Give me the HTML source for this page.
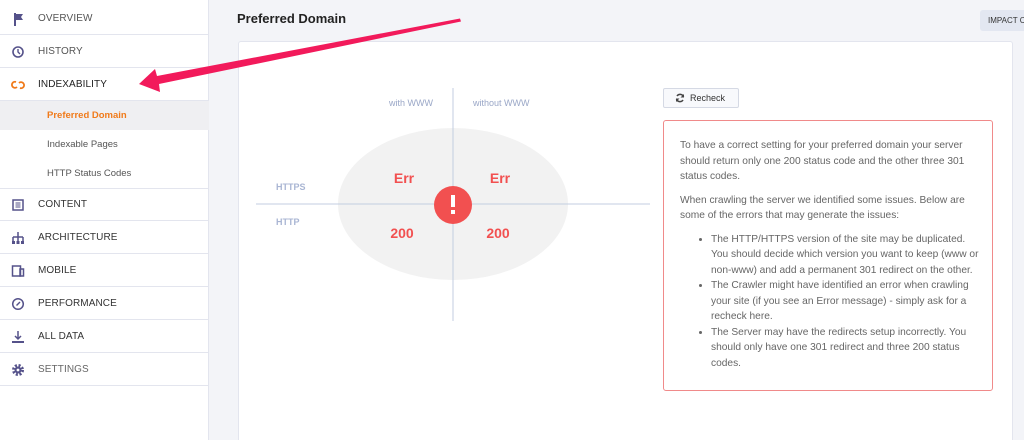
<!DOCTYPE html>
<html><head><meta charset="utf-8"><style>
*{box-sizing:border-box;margin:0;padding:0}
html,body{width:1024px;height:440px;overflow:hidden}
body{background:#f3f4f8;font-family:"Liberation Sans",sans-serif;position:relative}
.sb{position:absolute;left:0;top:0;width:209px;height:440px;background:#fff;border-right:1px solid #e3e5ee}
.it{position:absolute;left:0;width:209px;height:33px;border-bottom:1px solid #e3e5ee;font-size:10px;color:#333;line-height:33px;padding-left:38px;letter-spacing:0.1px}
.it svg{position:absolute;left:11px;top:10px}
.sub{position:absolute;left:0;width:209px;height:29px;line-height:29px;padding-left:47px;font-size:9.5px;color:#555}
.box{position:absolute;left:663px;top:120px;width:330px;height:271px;border:1px solid #f08a8a;border-radius:3px;background:#fff;padding:17px 8px 0 16px;font-size:10.2px;color:#666;line-height:15.5px}
.box ul{padding-left:31px;margin-top:8px}
</style></head><body>
<div class="sb">
 <div class="it" style="top:2px;color:#555"><svg width="14" height="14" viewBox="0 0 14 14"><rect x="3" y="1" width="2" height="13" fill="#55528a"/><path d="M5 2h7l-2 3 2 3H5z" fill="#55528a"/></svg>OVERVIEW</div>
 <div class="it" style="top:35px;color:#555"><svg width="14" height="14" viewBox="0 0 14 14"><circle cx="7" cy="7" r="5" fill="none" stroke="#55528a" stroke-width="1.6"/><path d="M7 4v3l2 2" stroke="#55528a" stroke-width="1.4" fill="none"/></svg>HISTORY</div>
 <div class="it" style="top:68px;color:#222"><svg width="14" height="14" viewBox="0 0 14 14"><path d="M5 4a3 3 0 1 0 1 5M9 10a3 3 0 1 0-1-5" stroke="#f07a1a" stroke-width="1.8" fill="none"/></svg>INDEXABILITY</div>
 <div class="sub" style="top:101px;background:#efeff2;color:#f07a1a;font-weight:bold">Preferred Domain</div>
 <div class="sub" style="top:130px">Indexable Pages</div>
 <div class="sub" style="top:159px;border-bottom:1px solid #e3e5ee;height:30px">HTTP Status Codes</div>
 <div class="it" style="top:188px"><svg width="14" height="14" viewBox="0 0 14 14"><rect x="2" y="2" width="10" height="10" fill="none" stroke="#55528a" stroke-width="1.5"/><path d="M4.5 5h5M4.5 7h5M4.5 9h5" stroke="#55528a" stroke-width="1"/></svg>CONTENT</div>
 <div class="it" style="top:221px"><svg width="14" height="14" viewBox="0 0 14 14"><path d="M7 1v5M2 6h10M2 6v4M7 6v4M12 6v4" stroke="#55528a" stroke-width="1.5" fill="none"/><rect x="1" y="10" width="3" height="3" fill="#55528a"/><rect x="5.5" y="10" width="3" height="3" fill="#55528a"/><rect x="10" y="10" width="3" height="3" fill="#55528a"/></svg>ARCHITECTURE</div>
 <div class="it" style="top:254px"><svg width="14" height="14" viewBox="0 0 14 14"><rect x="1.5" y="2" width="8" height="10" fill="none" stroke="#55528a" stroke-width="1.5"/><rect x="9" y="5" width="3.5" height="7" fill="none" stroke="#55528a" stroke-width="1.5"/></svg>MOBILE</div>
 <div class="it" style="top:287px"><svg width="14" height="14" viewBox="0 0 14 14"><circle cx="7" cy="7" r="5.3" fill="none" stroke="#55528a" stroke-width="1.5"/><path d="M5.5 8.5L9 5" stroke="#55528a" stroke-width="1.4"/></svg>PERFORMANCE</div>
 <div class="it" style="top:320px"><svg width="14" height="14" viewBox="0 0 14 14"><path d="M7 1v8M4 6l3 3 3-3" stroke="#55528a" stroke-width="1.5" fill="none"/><rect x="1" y="11" width="12" height="2" fill="#55528a"/></svg>ALL DATA</div>
 <div class="it" style="top:353px;color:#666"><svg width="14" height="14" viewBox="0 0 14 14"><circle cx="7" cy="7" r="4.5" fill="none" stroke="#55528a" stroke-width="3" stroke-dasharray="2 1.6"/><circle cx="7" cy="7" r="3.5" fill="#55528a"/><circle cx="7" cy="7" r="1.4" fill="#fff"/></svg>SETTINGS</div>
</div>
<div style="position:absolute;left:237px;top:11px;font-size:13px;font-weight:bold;color:#222;white-space:nowrap">Preferred Domain</div>
<div style="position:absolute;left:980px;top:10px;width:50px;height:21px;background:#e3e7f1;border-radius:3px;font-size:8px;color:#333;line-height:21px;padding-left:8px;white-space:nowrap">IMPACT C</div>
<div style="position:absolute;left:238px;top:41px;width:775px;height:399px;background:#fff;border:1px solid #e3e5ee;border-bottom:none;border-radius:3px 3px 0 0"></div>
<svg style="position:absolute;left:0;top:0" width="1024" height="440">
 <ellipse cx="453" cy="204" rx="115" ry="76" fill="#f2f2f2"/>
 <line x1="453" y1="88" x2="453" y2="321" stroke="#c3cde0" stroke-width="1"/>
 <line x1="256" y1="204" x2="650" y2="204" stroke="#c3cde0" stroke-width="1"/>
 <circle cx="453" cy="205" r="19" fill="#f25050"/>
 <rect x="451" y="195" width="4" height="12" fill="#fff"/><rect x="451" y="210" width="4" height="4" fill="#fff"/>
 <text x="433" y="106" text-anchor="end" font-size="9" fill="#9aa7c7" font-family="Liberation Sans">with WWW</text>
 <text x="473" y="106" font-size="9" fill="#9aa7c7" font-family="Liberation Sans">without WWW</text>
 <text x="276" y="190" font-size="9" font-weight="bold" fill="#a9b5d3" font-family="Liberation Sans">HTTPS</text>
 <text x="276" y="225" font-size="9" font-weight="bold" fill="#a9b5d3" font-family="Liberation Sans">HTTP</text>
 <g font-size="14" font-weight="bold" fill="#f25050" font-family="Liberation Sans" text-anchor="middle">
  <text x="404" y="183">Err</text><text x="500" y="183">Err</text>
  <text x="402" y="238">200</text><text x="498" y="238">200</text>
 </g>
 <polygon points="460,18.5 157,76 155,69 139,84 160,92 159,84 461,21.5" fill="#f21a5b"/>
</svg>
<div style="position:absolute;left:663px;top:88px;width:76px;height:20px;border:1px solid #d5d9e4;border-radius:2px;background:#f8f9fc;font-size:9px;color:#333;line-height:18px;padding-left:26px"><svg style="position:absolute;left:11px;top:4px" width="10" height="10" viewBox="0 0 10 10"><path d="M8.5 4A3.6 3.6 0 0 0 2 3M1.5 6A3.6 3.6 0 0 0 8 7" stroke="#444" stroke-width="1.5" fill="none"/><path d="M9 1v3.5H5.5z" fill="#444"/><path d="M1 9V5.5h3.5z" fill="#444"/></svg>Recheck</div>
<div class="box">
 <p>To have a correct setting for your preferred domain your server should return only one 200 status code and the other three 301 status codes.</p>
 <p style="margin-top:8px">When crawling the server we identified some issues. Below are some of the errors that may generate the issues:</p>
 <ul>
  <li>The HTTP/HTTPS version of the site may be duplicated. You should decide which version you want to keep (www or non-www) and add a permanent 301 redirect on the other.</li>
  <li>The Crawler might have identified an error when crawling your site (if you see an Error message) - simply ask for a recheck here.</li>
  <li>The Server may have the redirects setup incorrectly. You should only have one 301 redirect and three 200 status codes.</li>
 </ul>
</div>
</body></html>
